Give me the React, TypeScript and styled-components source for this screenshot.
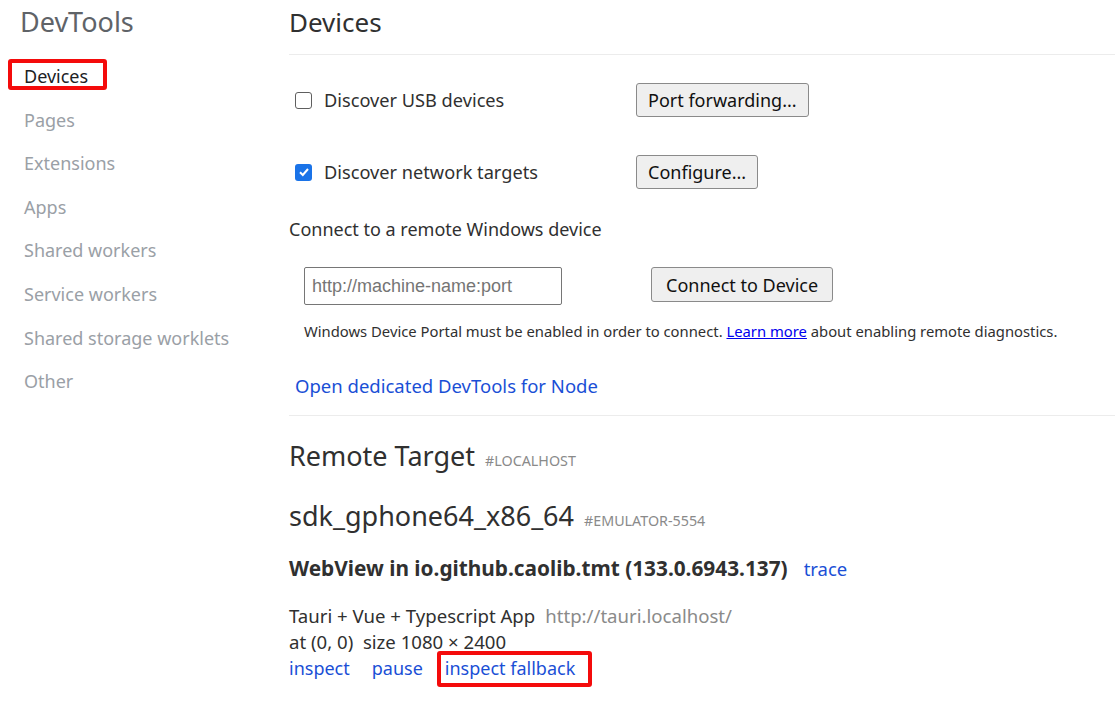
import React from "react";
import styled, { createGlobalStyle } from "styled-components";

const Global = createGlobalStyle`
  html, body { margin: 0; padding: 0; background: #fff; }
  body { font-family: "Noto Sans", "Open Sans", sans-serif; color: #303030; }
`;

const Page = styled.div`
  display: grid;
  grid-template-columns: 289px 1fr;
  width: 1115px;
  height: 715px;
  overflow: hidden;
`;

const Sidebar = styled.nav`
  display: flex;
  flex-direction: column;
  padding: 4px 0 0 20px;
`;

const AppTitle = styled.div`
  font-size: 27px;
  color: #5f6368;
  height: 36px;
  line-height: 36px;
  margin-bottom: 20px;
`;

const NavItem = styled.div<{ $active?: boolean }>`
  position: relative;
  font-size: 18px;
  height: 43.6px;
  line-height: 32px;
  padding-left: 4px;
  color: ${(p) => (p.$active ? "#202124" : "#9aa0a6")};
`;

const Highlight = styled.span<{ $w: number }>`
  position: absolute;
  left: -12px;
  top: -1px;
  width: ${(p) => p.$w}px;
  height: 31px;
  border: 4px solid #f40b0b;
  border-radius: 3px;
  box-sizing: border-box;
`;

const Main = styled.main`
  display: flex;
  flex-direction: column;
  padding-top: 4px;
`;

const Heading = styled.h1`
  margin: 0;
  font-weight: 400;
  font-size: 26px;
  color: #303030;
  line-height: 36px;
  padding-bottom: 14px;
  border-bottom: 1px solid #ececec;
`;

const Section = styled.section`
  display: flex;
  flex-direction: column;
  padding: 9px 0 0 6px;
`;

const OptionRow = styled.div`
  display: grid;
  grid-template-columns: 341px auto;
  align-items: center;
  height: 72px;
`;

const CheckLabel = styled.label`
  display: flex;
  align-items: center;
  gap: 12px;
  font-size: 18.2px;
  color: #303030;
`;

const Box = styled.span<{ $checked?: boolean }>`
  width: 17px;
  height: 17px;
  box-sizing: border-box;
  border-radius: 3px;
  border: ${(p) => (p.$checked ? "none" : "1.5px solid #5f5f5f")};
  background: ${(p) => (p.$checked ? "#1a73e8" : "#fff")};
  display: flex;
  align-items: center;
  justify-content: center;
`;

const Button = styled.button`
  font-family: "Noto Sans", sans-serif;
  font-size: 18px;
  color: #111;
  background: #efefef;
  border: 1px solid #8a8a8a;
  border-radius: 3px;
  height: 34px;
  padding: 0 11px;
  justify-self: start;
`;

const SubTitle = styled.div`
  font-size: 18px;
  color: #303030;
  margin: 9px 0 0 -6px;
  line-height: 24px;
`;

const ConnectRow = styled.div`
  display: flex;
  align-items: flex-start;
  gap: 89px;
  margin: 26px 0 0 9px;
`;

const Input = styled.input`
  width: 258px;
  height: 38px;
  box-sizing: border-box;
  border: 1px solid #767676;
  border-radius: 2px;
  font-family: "Liberation Sans", Arial, sans-serif;
  font-size: 18px;
  padding: 0 7px;
  &::placeholder { color: #757575; }
`;

const ConnectButton = styled(Button)`
  padding: 0 14px;
  height: 35px;
`;

const Note = styled.p`
  margin: 16px 0 0 9px;
  font-size: 14.8px;
  color: #303030;
  line-height: 20px;
  a { color: #0000ee; }
`;

const NodeLink = styled.a`
  display: block;
  margin: 33px 0 0 0;
  font-size: 18.5px;
  color: #1a4fd6;
  text-decoration: none;
  line-height: 24px;
  padding-bottom: 17px;
`;

const Divider = styled.div`
  border-top: 1px solid #ececec;
`;

const BigTitle = styled.div<{ $mt: number }>`
  font-size: 27px;
  color: #303030;
  line-height: 36px;
  margin-top: ${(p) => p.$mt}px;
  display: flex;
  align-items: baseline;
  gap: 10px;
`;

const Tag = styled.span`
  font-size: 14.3px;
  color: #8a8a8a;
`;

const TargetName = styled.div`
  font-size: 20.8px;
  font-weight: 700;
  color: #303030;
  margin-top: 15px;
  line-height: 28px;
  display: flex;
  align-items: baseline;
  gap: 16px;
`;

const Action = styled.a`
  color: #1a4fd6;
  font-weight: 400;
  text-decoration: none;
  position: relative;
`;

const TraceLink = styled(Action)`
  font-size: 18.5px;
`;

const Info = styled.div`
  margin-top: 20px;
  font-size: 18.6px;
  color: #303030;
  line-height: 26px;
`;

const Url = styled.span`
  color: #8a8a8a;
  margin-left: 10px;
`;

const Actions = styled.div`
  display: flex;
  gap: 22px;
  font-size: 18px;
  line-height: 26px;
`;

const FallbackBox = styled.span`
  position: absolute;
  left: -8px;
  top: -4px;
  right: -17px;
  bottom: -6px;
  border: 4px solid #f40b0b;
  border-radius: 3px;
`;

const Check = () => (
  <svg width="12" height="12" viewBox="0 0 12 12">
    <path d="M2 6.3 L4.8 9 L10 3" stroke="#fff" strokeWidth="2" fill="none" />
  </svg>
);

const navItems = [
  "Pages",
  "Extensions",
  "Apps",
  "Shared workers",
  "Service workers",
  "Shared storage worklets",
  "Other",
];

export default function App() {
  return (
    <>
      <Global />
      <Page>
        <Sidebar>
          <AppTitle>DevTools</AppTitle>
          <NavItem $active>
            <Highlight $w={99} />
            Devices
          </NavItem>
          {navItems.map((n) => (
            <NavItem key={n}>{n}</NavItem>
          ))}
        </Sidebar>
        <Main>
          <Heading>Devices</Heading>
          <Section>
            <OptionRow>
              <CheckLabel>
                <Box />
                Discover USB devices
              </CheckLabel>
              <Button>Port forwarding...</Button>
            </OptionRow>
            <OptionRow>
              <CheckLabel>
                <Box $checked>
                  <Check />
                </Box>
                Discover network targets
              </CheckLabel>
              <Button>Configure...</Button>
            </OptionRow>
            <SubTitle>Connect to a remote Windows device</SubTitle>
            <ConnectRow>
              <Input placeholder="http://machine-name:port" />
              <ConnectButton>Connect to Device</ConnectButton>
            </ConnectRow>
            <Note>
              Windows Device Portal must be enabled in order to connect. <a href="#">Learn more</a> about enabling
              remote diagnostics.
            </Note>
            <NodeLink href="#">Open dedicated DevTools for Node</NodeLink>
          </Section>
          <Divider />
          <BigTitle $mt={22}>
            Remote Target <Tag>#LOCALHOST</Tag>
          </BigTitle>
          <BigTitle $mt={19}>
            sdk_gphone64_x86_64 <Tag>#EMULATOR-5554</Tag>
          </BigTitle>
          <TargetName>
            WebView in io.github.caolib.tmt (133.0.6943.137)
            <TraceLink href="#">trace</TraceLink>
          </TargetName>
          <Info>
            Tauri + Vue + Typescript App<Url>http://tauri.localhost/</Url>
            <br />
            at (0, 0)&nbsp; size 1080 × 2400
          </Info>
          <Actions>
            <Action href="#">inspect</Action>
            <Action href="#">pause</Action>
            <Action href="#">
              <FallbackBox />
              inspect fallback
            </Action>
          </Actions>
        </Main>
      </Page>
    </>
  );
}
